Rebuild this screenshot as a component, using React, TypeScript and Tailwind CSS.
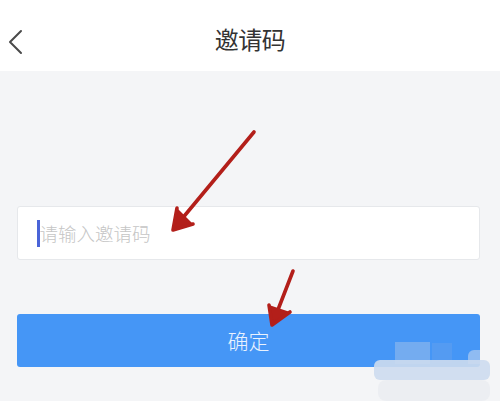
import React from "react";

export default function App() {
  return (
    <div
      className="relative w-[500px] h-[401px] overflow-hidden bg-[#f4f5f7]"
      style={{ fontFamily: '"Noto Sans CJK SC", "Noto Sans", sans-serif' }}
    >
      <header className="relative flex h-[71px] items-center justify-center bg-white">
        <svg
          className="absolute left-[7px] top-[29px]"
          width="18"
          height="26"
          viewBox="0 0 18 26"
          fill="none"
        >
          <path d="M14 2 L3 13 L14 24" stroke="#4a4a4a" strokeWidth="2" strokeLinecap="round" strokeLinejoin="round" />
        </svg>
        <h1 className="text-[24px] font-normal leading-none text-[#333] tracking-[-0.5px] pt-[7px]">邀请码</h1>
      </header>

      <div className="flex flex-col pl-[17px] pr-[20px] pt-[135px]">
        <div className="flex h-[54px] items-center rounded-[3px] border border-[#e6e8eb] bg-white pl-[19px]">
          <span className="h-[27px] w-[2.5px] bg-[#4a64d8]" />
          <span className="text-[18.5px] font-light leading-none text-[#c5c5c5]">请输入邀请码</span>
        </div>
        <div className="mt-[54px] flex h-[53px] items-center justify-center rounded-[3px] bg-[#4596f6]">
          <span className="text-[21px] font-light leading-none text-[#e9f2fe]">确定</span>
        </div>
      </div>

      {/* arrows overlay */}
      <svg className="absolute left-0 top-0" width="500" height="401" viewBox="0 0 500 401" fill="none">
        <g stroke="#b31f1a" strokeWidth="3.6" strokeLinecap="round" strokeLinejoin="round">
          <path d="M254 132 L176 226" />
          <path d="M177 208 L173 230 L193 224" fill="#b31f1a" />
          <path d="M293 271 L274 320" />
          <path d="M269 305 L272 325 L290 312" fill="#b31f1a" />
        </g>
      </svg>

      {/* blurred watermark blocks */}
      <div className="absolute left-[395px] top-[342px] h-[22px] w-[35px] bg-[#7fb1ef] opacity-80" />
      <div className="absolute left-[432px] top-[343px] h-[20px] w-[20px] bg-[#5f9ef0] opacity-60" />
      <div className="absolute left-[468px] top-[350px] h-[14px] w-[12px] rounded-tl-[6px] bg-[#8fbbf2]" />
      <div className="absolute left-[374px] top-[360px] h-[20px] w-[116px] rounded-[6px] bg-[#cddcee] opacity-90" />
      <div className="absolute left-[378px] top-[380px] h-[21px] w-[112px] rounded-[8px] bg-[#eceef2]" />
    </div>
  );
}
